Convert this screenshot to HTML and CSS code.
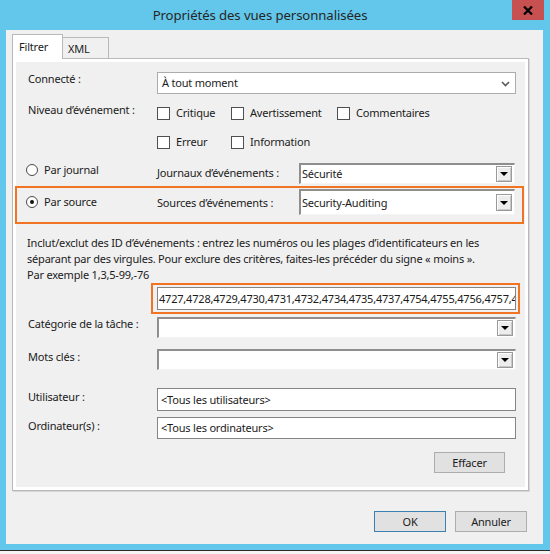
FILE: index.html
```html
<!DOCTYPE html>
<html lang="fr">
<head>
<meta charset="utf-8">
<title>Propriétés des vues personnalisées</title>
<link rel="stylesheet" href="styles.css">
</head>
<body>
<div class="screen">
  <div class="titlebar">
    <div class="title">Propriétés des vues personnalisées</div>
    <div class="close">
      <svg width="10" height="9" viewBox="0 0 10 9"><path d="M1 0.5 L9 8.5 M9 0.5 L1 8.5" stroke="#000" stroke-width="2.3" fill="none"/></svg>
    </div>
  </div>
  <div class="frame">
    <div class="client">
      <div class="tabs">
        <div class="tab active">Filtrer</div>
        <div class="tab">XML</div>
      </div>
      <div class="panel">
        <div class="page">
          <div class="row r-connect">
            <div class="lbl">Connecté :</div>
            <div class="combo-flat">
              <span>À tout moment</span>
              <svg class="chev" width="9" height="6" viewBox="0 0 9 6"><path d="M1 1 L4.5 4.5 L8 1" stroke="#5a5a5a" stroke-width="1.6" fill="none"/></svg>
            </div>
          </div>

          <div class="row r-level">
            <div class="lbl">Niveau d’événement :</div>
            <div class="checks">
              <div class="check-line">
                <div class="chk w1"><span class="box"></span>Critique</div>
                <div class="chk w2"><span class="box"></span>Avertissement</div>
                <div class="chk"><span class="box"></span>Commentaires</div>
              </div>
              <div class="check-line second">
                <div class="chk w1"><span class="box"></span>Erreur</div>
                <div class="chk w2"><span class="box"></span>Information</div>
              </div>
            </div>
          </div>

          <div class="row r-journal">
            <span class="radio"></span>
            <div class="rlbl">Par journal</div>
            <div class="slbl">Journaux d’événements :</div>
            <div class="combo3d">
              <span class="val">Sécurité</span>
              <span class="ddbtn"><svg width="8" height="4" viewBox="0 0 8 4"><path d="M0 0 H8 L4 4 Z" fill="#000"/></svg></span>
            </div>
          </div>

          <div class="hl-source">
            <div class="row r-source">
              <span class="radio on"></span>
              <div class="rlbl">Par source</div>
              <div class="slbl">Sources d’événements :</div>
              <div class="combo3d tall">
                <span class="val">Security-Auditing</span>
                <span class="ddbtn"><svg width="8" height="4" viewBox="0 0 8 4"><path d="M0 0 H8 L4 4 Z" fill="#000"/></svg></span>
              </div>
            </div>
          </div>

          <p class="desc">Inclut/exclut des ID d’événements : entrez les numéros ou les plages d’identificateurs en les<br>séparant par des virgules. Pour exclure des critères, faites-les précéder du signe « moins ».<br>Par exemple 1,3,5-99,-76</p>

          <div class="hl-ids">
            <div class="input ids">4727,4728,4729,4730,4731,4732,4734,4735,4737,4754,4755,4756,4757,4</div>
          </div>

          <div class="row r-cat">
            <div class="lbl">Catégorie de la tâche :</div>
            <div class="combo3d wide">
              <span class="val"></span>
              <span class="ddbtn"><svg width="8" height="4" viewBox="0 0 8 4"><path d="M0 0 H8 L4 4 Z" fill="#000"/></svg></span>
            </div>
          </div>

          <div class="row r-kw">
            <div class="lbl">Mots clés :</div>
            <div class="combo3d wide">
              <span class="val"></span>
              <span class="ddbtn"><svg width="8" height="4" viewBox="0 0 8 4"><path d="M0 0 H8 L4 4 Z" fill="#000"/></svg></span>
            </div>
          </div>

          <div class="row r-user">
            <div class="lbl">Utilisateur :</div>
            <div class="input field">&lt;Tous les utilisateurs&gt;</div>
          </div>

          <div class="row r-comp">
            <div class="lbl">Ordinateur(s) :</div>
            <div class="input field short">&lt;Tous les ordinateurs&gt;</div>
          </div>

          <div class="row r-clear">
            <button class="btn clear">Effacer</button>
          </div>
        </div>
      </div>
      <div class="actions">
        <button class="btn default">OK</button>
        <button class="btn">Annuler</button>
      </div>
    </div>
  </div>
  <div class="taskbar"></div>
</div>
</body>
</html>
```

FILE: styles.css
```css
* { box-sizing: border-box; }
html, body { margin: 0; padding: 0; }
body {
  font-family: "Noto Sans", "Open Sans", sans-serif;
  font-size: 11px;
  letter-spacing: -0.2px;
  color: #1b1b1b;
  background: #f5f5f5;
}
.screen {
  width: 550px;
  height: 554px;
  display: flex;
  flex-direction: column;
  overflow: hidden;
}
.titlebar {
  height: 30px;
  background: #62c7ea;
  position: relative;
  display: flex;
  align-items: center;
  justify-content: center;
  padding-right: 30px;
  flex: none;
}
.title {
  font-size: 13.2px;
  letter-spacing: -0.1px;
  color: #262626;
  line-height: 20px;
}
.close {
  position: absolute;
  left: 512px;
  top: 0;
  width: 32px;
  height: 20px;
  background: #c75050;
  display: flex;
  align-items: center;
  justify-content: center;
}
.frame {
  height: 520px;
  background: #62c7ea;
  padding: 0 7px 6px 6px;
  flex: none;
}
.client {
  height: 514px;
  background: #f0f0f0;
  padding-top: 4px;
}
.tabs {
  display: flex;
  align-items: flex-end;
  height: 24px;
  margin-left: 6px;
}
.tab {
  border: 1px solid #b9b9b9;
  border-bottom: none;
  line-height: 16px;
}
.tab.active {
  width: 51px;
  height: 25px;
  background: #fff;
  padding: 4px 0 0 6px;
  margin-bottom: -1px;
  position: relative;
  z-index: 1;
}
.tab:not(.active) {
  width: 46px;
  height: 21px;
  border-left: none;
  background: #f0f0f0;
  padding: 3px 0 0 5px;
}
.panel {
  margin-left: 6px;
  width: 517px;
  height: 433px;
  border: 1px solid #b9b9b9;
  background: #fff;
  padding: 3px;
  box-shadow: 1px 1px 0 #d6d6d6;
}
.page {
  height: 425px;
  background: #f0f0f0;
  display: flex;
  flex-direction: column;
}
.row {
  display: flex;
  align-items: flex-start;
  flex: none;
}
.lbl {
  width: 129px;
  line-height: 16px;
  white-space: nowrap;
  flex: none;
}
.r-connect { margin-top: 10px; padding-left: 12px; height: 22px; }
.r-connect .lbl { margin-top: -1px; }
.combo-flat {
  width: 359px;
  height: 22px;
  border: 1px solid #acacac;
  background: #fff;
  display: flex;
  align-items: center;
  justify-content: space-between;
  padding: 0 5px 0 4px;
}
.combo-flat span { line-height: 16px; }
.chev { margin-top: 1px; }

.r-level { margin-top: 10px; padding-left: 12px; }
.r-level .lbl { margin-top: -2px; }
.checks { display: flex; flex-direction: column; }
.check-line { display: flex; height: 18px; align-items: center; }
.check-line.second { margin-top: 11px; }
.chk { display: flex; align-items: center; line-height: 16px; white-space: nowrap; }
.chk.w1 { width: 74px; }
.chk.w2 { width: 106px; }
.box {
  width: 13px;
  height: 13px;
  border: 1px solid #505050;
  background: #fff;
  margin-right: 6px;
  flex: none;
}

.radio {
  width: 12px;
  height: 12px;
  border: 1px solid #4a4a4a;
  border-radius: 50%;
  background: #fff;
  flex: none;
  margin-right: 6px;
  display: flex;
  align-items: center;
  justify-content: center;
}
.radio.on::after {
  content: "";
  width: 4px;
  height: 4px;
  border-radius: 50%;
  background: #111;
}
.rlbl { width: 113px; line-height: 16px; white-space: nowrap; flex: none; }
.slbl { width: 142px; line-height: 16px; white-space: nowrap; flex: none; }

.r-journal { margin-top: 12px; padding-left: 10px; height: 21px; }
.r-journal .radio { margin-top: 1px; }
.r-journal .rlbl { margin-top: -1px; }
.r-journal .slbl { margin-top: 2px; }

.combo3d {
  width: 216px;
  height: 21px;
  background: #fff;
  border-style: solid;
  border-width: 2px 1px 1px 2px;
  border-color: #8e8e8e #f4f4f4 #f4f4f4 #8e8e8e;
  display: flex;
  align-items: center;
  justify-content: space-between;
  padding: 0 2px 0 1px;
  flex: none;
}
.combo3d .val { line-height: 16px; }
.combo3d.tall { height: 26px; }
.combo3d.wide { width: 359px; }
.ddbtn {
  width: 16px;
  height: 16px;
  border: 1px solid #9a9a9a;
  background: #ededed;
  box-shadow: inset 1px 1px 0 #fff, inset -1px -1px 0 #c8c8c8;
  display: flex;
  align-items: center;
  justify-content: center;
  flex: none;
}
.combo3d.tall .ddbtn { height: 17px; }

.hl-source {
  margin-top: 2px;
  margin-left: -1px;
  width: 509px;
  height: 38px;
  border: 2px solid #f07421;
  padding: 1px 0 0 9px;
  flex: none;
}
.r-source .radio { margin-top: 7px; }
.r-source .rlbl { margin-top: 5px; }
.r-source .slbl { margin-top: 6px; }

.desc {
  margin: 11px 0 0 11px;
  line-height: 16px;
  white-space: nowrap;
  flex: none;
}

.hl-ids {
  margin-left: 135px;
  width: 369px;
  height: 31px;
  border: 2px solid #f07421;
  padding: 2px 2px 2px 4px;
  flex: none;
}
.input {
  background: #fff;
  border: 1px solid #858585;
  line-height: 16px;
  white-space: nowrap;
  overflow: hidden;
  display: flex;
  align-items: center;
}
.input.ids { height: 23px; padding-left: 1px; }

.r-cat { margin-top: 3px; padding-left: 12px; height: 21px; }
.r-cat .lbl { margin-top: -1px; }
.r-kw { margin-top: 11px; padding-left: 12px; height: 21px; }
.r-kw .lbl { margin-top: 0; }
.r-user { margin-top: 18px; padding-left: 12px; height: 23px; }
.r-user .lbl { margin-top: 1px; }
.r-comp { margin-top: 6px; padding-left: 12px; height: 22px; }
.r-comp .lbl { margin-top: 1px; }
.input.field { width: 359px; height: 23px; padding-left: 3px; }
.input.field.short { height: 22px; }

.r-clear { margin-top: 13px; justify-content: flex-end; padding-right: 20px; }

.btn {
  font-family: inherit;
  font-size: inherit;
  letter-spacing: inherit;
  color: #1b1b1b;
  width: 72px;
  height: 21px;
  background: #e1e1e1;
  border: 1px solid #adadad;
  padding: 0;
  line-height: 16px;
}
.btn.clear { width: 71px; }
.btn.default { border-color: #3c7fb1; }
.actions {
  display: flex;
  justify-content: flex-end;
  gap: 9px;
  margin-top: 20px;
  padding-right: 16px;
}
.taskbar {
  height: 4px;
  background: #f4f4f4;
  border-top: 1px solid #2a2a2a;
  flex: none;
}
```
